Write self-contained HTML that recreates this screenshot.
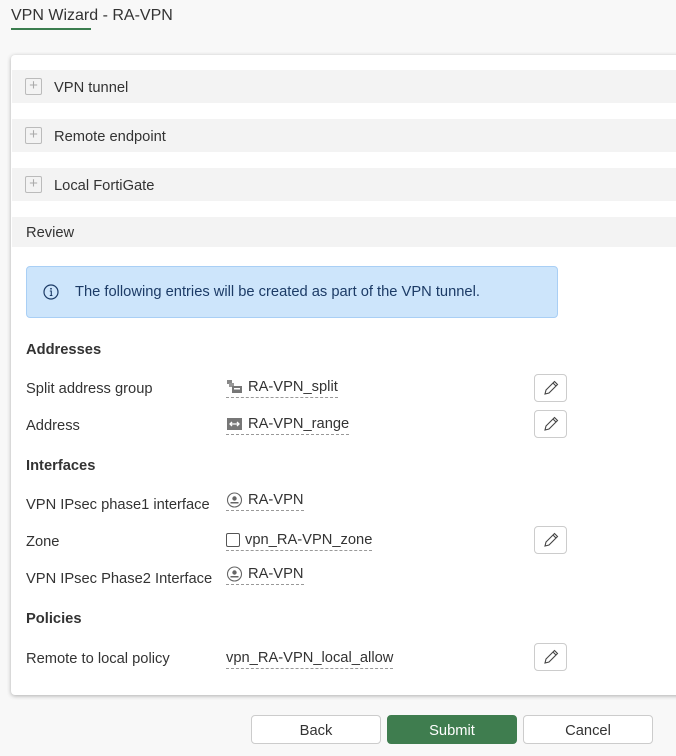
<!DOCTYPE html>
<html><head><style>
*{box-sizing:border-box;margin:0;padding:0}
body{width:676px;height:756px;background:#f8f8f8;font-family:"Liberation Sans",sans-serif;color:#333;font-size:14.7px;position:relative;overflow:hidden}
.a{position:absolute}
.title{left:11px;top:7px;font-size:16px;color:#333}
.uline{left:11px;top:28px;width:80px;height:2px;background:#3b7d4f}
.card{left:11px;top:55px;width:680px;height:640px;background:#fff;border-radius:4px;box-shadow:0 1px 4px rgba(0,0,0,.3)}
.sec{left:12px;width:670px;background:#f3f3f3;color:#333}
.sec .t{transform:translateY(2px)}
.plus{position:absolute;left:13px;width:17px;height:17px;border:1px solid #bbb;border-radius:2px;color:#aaa;font-size:15px;line-height:14px;text-align:center}
.info{left:26px;top:266px;width:532px;height:52px;background:#cde5fb;border:1px solid #a9cff5;border-radius:4px;color:#1c3b66}
.h,.l,.v{transform:translateY(2px)}
.h{left:26px;font-weight:bold;color:#333}
.l{left:26px;color:#333}
.v{left:226px;color:#333;border-bottom:1px dashed #999;padding-bottom:2px;display:flex;align-items:center;gap:5px}
.ed{left:534px;width:33px;height:28px;border:1px solid #ccc;border-radius:4px;background:#fff;display:flex;align-items:center;justify-content:center}
.btn{top:715px;width:130px;height:29px;border:1px solid #ccc;border-radius:4px;background:#fff;text-align:center;line-height:30px;color:#333}
</style></head><body>
<div class="a title">VPN Wizard - RA-VPN</div>
<div class="a uline"></div>
<div class="a card"></div>
<div class="a sec" style="top:70px;height:33px"><span class="plus" style="top:8px">+</span><span class="a t" style="left:42px;top:8px">VPN tunnel</span></div>
<div class="a sec" style="top:119px;height:33px"><span class="plus" style="top:8px">+</span><span class="a t" style="left:42px;top:8px">Remote endpoint</span></div>
<div class="a sec" style="top:168px;height:33px"><span class="plus" style="top:8px">+</span><span class="a t" style="left:42px;top:8px">Local FortiGate</span></div>
<div class="a sec" style="top:217px;height:30px"><span class="a t" style="left:14px;top:6px">Review</span></div>
<div class="a info"><svg class="a" style="left:16px;top:17px" width="16" height="16" viewBox="0 0 16 16"><circle cx="8" cy="8" r="7" fill="none" stroke="#1c3b66" stroke-width="1.2"/><circle cx="8" cy="4.8" r="0.9" fill="#1c3b66"/><path d="M6.8 7h1.5v4.5M6.8 11.5h2.6" stroke="#1c3b66" stroke-width="1.1" fill="none"/></svg><span class="a" style="left:48px;top:17px">The following entries will be created as part of the VPN tunnel.</span></div>
<div class="a h" style="top:340px">Addresses</div>
<div class="a l" style="top:379px">Split address group</div>
<div class="a v" style="top:377px"><svg width="17" height="14" viewBox="0 0 17 14"><rect x="1" y="0" width="5" height="4" fill="#888"/><rect x="3" y="3" width="5" height="4" fill="#999"/><rect x="6" y="6" width="10" height="7" fill="#777"/><rect x="8" y="8" width="6" height="1.5" fill="#fff"/></svg>RA-VPN_split</div>
<div class="a ed" style="top:374px"><svg width="18" height="18" viewBox="0 0 18 18"><path d="M3 15l1-4 8.5-8.5 3 3-8.5 8.5z M11 4l3 3" fill="none" stroke="#444" stroke-width="1.1"/></svg></div>
<div class="a l" style="top:416px">Address</div>
<div class="a v" style="top:414px"><svg width="17" height="14" viewBox="0 0 17 14"><rect x="1" y="1" width="15" height="12" fill="#777"/><path d="M4 7h9M6 5l-2 2 2 2M11 5l2 2-2 2" stroke="#fff" stroke-width="1.3" fill="none"/></svg>RA-VPN_range</div>
<div class="a ed" style="top:410px"><svg width="18" height="18" viewBox="0 0 18 18"><path d="M3 15l1-4 8.5-8.5 3 3-8.5 8.5z M11 4l3 3" fill="none" stroke="#444" stroke-width="1.1"/></svg></div>
<div class="a h" style="top:456px">Interfaces</div>
<div class="a l" style="top:495px">VPN IPsec phase1 interface</div>
<div class="a v" style="top:490px"><svg width="17" height="16" viewBox="0 0 17 16"><circle cx="8.5" cy="8" r="7" fill="none" stroke="#666" stroke-width="1.1"/><circle cx="8.5" cy="6.5" r="2.2" fill="#666"/><rect x="4.5" y="10" width="8" height="1.5" fill="#666"/></svg>RA-VPN</div>
<div class="a l" style="top:532px">Zone</div>
<div class="a v" style="top:530px"><span style="display:inline-block;width:14px;height:14px;border:1px solid #555;border-radius:2px"></span>vpn_RA-VPN_zone</div>
<div class="a ed" style="top:526px"><svg width="18" height="18" viewBox="0 0 18 18"><path d="M3 15l1-4 8.5-8.5 3 3-8.5 8.5z M11 4l3 3" fill="none" stroke="#444" stroke-width="1.1"/></svg></div>
<div class="a l" style="top:569px">VPN IPsec Phase2 Interface</div>
<div class="a v" style="top:564px"><svg width="17" height="16" viewBox="0 0 17 16"><circle cx="8.5" cy="8" r="7" fill="none" stroke="#666" stroke-width="1.1"/><circle cx="8.5" cy="6.5" r="2.2" fill="#666"/><rect x="4.5" y="10" width="8" height="1.5" fill="#666"/></svg>RA-VPN</div>
<div class="a h" style="top:609px">Policies</div>
<div class="a l" style="top:649px">Remote to local policy</div>
<div class="a v" style="top:648px">vpn_RA-VPN_local_allow</div>
<div class="a ed" style="top:643px"><svg width="18" height="18" viewBox="0 0 18 18"><path d="M3 15l1-4 8.5-8.5 3 3-8.5 8.5z M11 4l3 3" fill="none" stroke="#444" stroke-width="1.1"/></svg></div>
<div class="a btn" style="left:251px">Back</div>
<div class="a btn" style="left:387px;background:#3f7d4f;border-color:#3f7d4f;color:#fff">Submit</div>
<div class="a btn" style="left:523px">Cancel</div>
</body></html>
